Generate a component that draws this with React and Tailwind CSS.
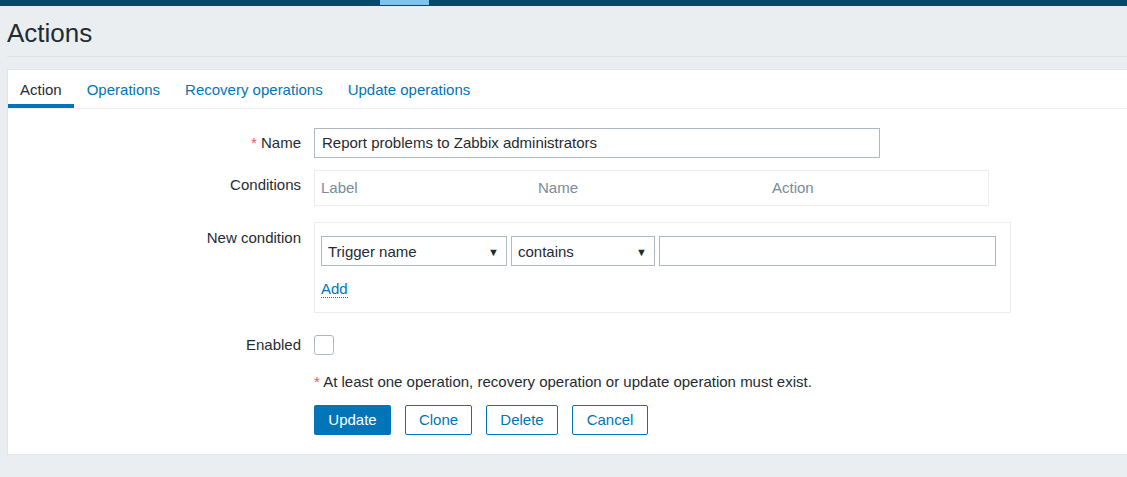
import { useState } from "react";

const font = { fontFamily: '"Liberation Sans", Arial, sans-serif' };

function FormRow({ label, required, top = "pt-[6px]", children, className = "" }) {
  return (
    <div className={`flex ${className}`}>
      <div className={`w-[293px] shrink-0 text-right ${top}`}>
        {required && <span className="text-[#e45959]">* </span>}
        {label}
      </div>
      <div className="ml-[13px] min-w-0 flex-1">{children}</div>
    </div>
  );
}

function Select({ value, width }) {
  return (
    <div
      className={`flex h-[30px] items-center justify-between border border-[#acbbc2] bg-white pl-[6px] pr-[7px] pt-[1px] ${width}`}
    >
      <span>{value}</span>
      <span className="text-[11px] text-[#1f2c33]">▼</span>
    </div>
  );
}

export default function App() {
  const [tab] = useState("Action");
  const tabs = ["Action", "Operations", "Recovery operations", "Update operations"];

  return (
    <div className="min-h-[477px] bg-[#ebeef1] text-[15px] leading-[18px] text-[#1f2c33]" style={font}>
      <div className="flex h-[6px] bg-[#0b466b]">
        <div className="ml-[380px] h-[5px] w-[49px] bg-[#7fc3ef]" />
      </div>

      <div className="pl-[7px]">
        <div className="flex h-[51px] items-center border-b border-[#dde2e6]">
          <h1 className="mt-[3px] text-[26px] leading-none">Actions</h1>
        </div>

        <div className="mt-[12px] border border-r-0 border-[#dfe4e7] bg-white pb-[19px]">
          <div className="flex h-[39px] gap-[1px] border-b border-[#ebeef1]">
            {tabs.map((t) => (
              <div
                key={t}
                className={`flex items-center border-b-[4px] px-[12px] pt-[6px] ${
                  t === tab ? "border-[#0275b8] text-[#1f2c33]" : "border-transparent text-[#0275b8]"
                }`}
              >
                {t}
              </div>
            ))}
          </div>

          <div className="pt-[19px]">
            <FormRow label="Name" required>
              <div className="flex h-[30px] w-[566px] items-center border border-[#acbbc2] px-[7px]">
                Report problems to Zabbix administrators
              </div>
            </FormRow>

            <FormRow label="Conditions" top="pt-[6px]" className="mt-[12px]">
              <div className="flex h-[36px] w-[675px] items-center border border-[#ebeef1] text-[#768d99]">
                <span className="w-[223px] pl-[6px]">Label</span>
                <span className="w-[234px]">Name</span>
                <span>Action</span>
              </div>
            </FormRow>

            <FormRow label="New condition" top="pt-[7px]" className="mt-[16px]">
              <div className="h-[91px] w-[697px] border border-[#ebeef1] px-[6px] pt-[13px]">
                <div className="flex gap-[4px]">
                  <Select value="Trigger name" width="w-[186px]" />
                  <Select value="contains" width="w-[144px]" />
                  <div className="h-[30px] w-[337px] border border-[#acbbc2]" />
                </div>
                <div className="mt-[14px]">
                  <span className="border-b border-dotted border-[#0275b8] text-[#0275b8]">Add</span>
                </div>
              </div>
            </FormRow>

            <FormRow label="Enabled" top="pt-[1px]" className="mt-[22px]">
              <div className="h-[20px] w-[20px] rounded-[3px] border border-[#acbbc2]" />
            </FormRow>

            <div className="ml-[306px] mt-[18px]">
              <span className="text-[#e45959]">* </span>
              At least one operation, recovery operation or update operation must exist.
            </div>

            <div className="ml-[306px] mt-[14px] flex gap-[14px]">
              <button className="h-[30px] w-[77px] rounded-[2px] bg-[#0275b8] text-white">Update</button>
              <button className="h-[30px] w-[67px] rounded-[2px] border border-[#0275b8] text-[#0275b8]">Clone</button>
              <button className="h-[30px] w-[72px] rounded-[2px] border border-[#0275b8] text-[#0275b8]">Delete</button>
              <button className="h-[30px] w-[76px] rounded-[2px] border border-[#0275b8] text-[#0275b8]">Cancel</button>
            </div>
          </div>
        </div>
      </div>
    </div>
  );
}
